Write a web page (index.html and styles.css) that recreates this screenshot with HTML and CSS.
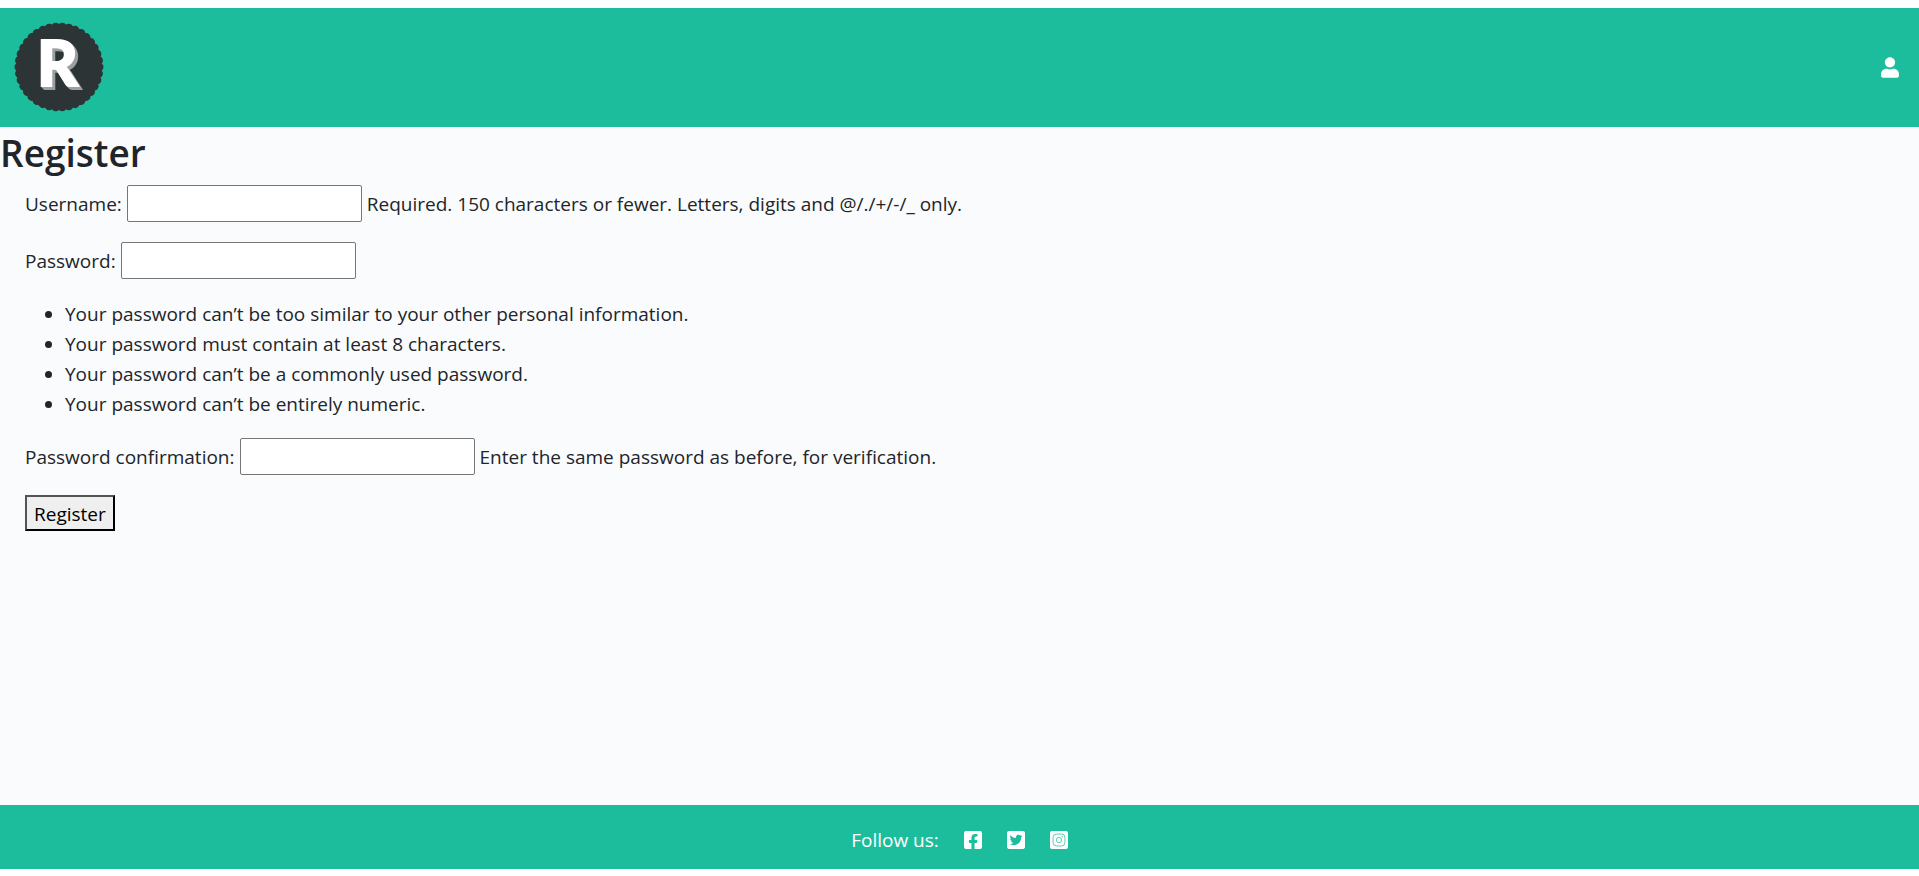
FILE: index.html
```html
<!DOCTYPE html>
<html lang="en">
<head>
<meta charset="utf-8">
<title>Register</title>
<link rel="stylesheet" href="styles.css">
</head>
<body>
<header class="site-header">
  <a class="logo" href="#" aria-label="Home">
    <svg viewBox="0 0 90 90" width="90" height="90" aria-hidden="true">
      <circle cx="45" cy="45" r="42" fill="#2d3436"/>
      <circle class="scallops" cx="45" cy="45" r="40" pathLength="38"/>
      <text class="logo-letter" x="23" y="64">R</text>
    </svg>
  </a>
  <a class="icon-link" href="#" aria-label="Account">
    <svg class="user-icon" viewBox="0 0 448 512"><path d="M224 256c70.700 0 128-57.300 128-128S294.700 0 224 0 96 57.300 96 128s57.300 128 128 128zm89.600 32h-16.700c-22.200 10.200-46.900 16-72.900 16s-50.600-5.800-72.900-16h-16.700C60.200 288 0 348.200 0 422.400V464c0 26.500 21.500 48 48 48h352c26.500 0 48-21.500 48-48v-41.600c0-74.200-60.200-134.400-134.400-134.400z"/></svg>
  </a>
</header>
<main class="content">
  <h1 class="title">Register</h1>
  <form class="register-form">
    <div class="field">
      <label for="username">Username:</label>
      <input id="username" type="text" maxlength="150">
      <span>Required. 150 characters or fewer. Letters, digits and @/./+/-/_ only.</span>
    </div>
    <div class="field">
      <label for="password1">Password:</label>
      <input id="password1" type="password">
    </div>
    <ul class="rules">
      <li>Your password can’t be too similar to your other personal information.</li>
      <li>Your password must contain at least 8 characters.</li>
      <li>Your password can’t be a commonly used password.</li>
      <li>Your password can’t be entirely numeric.</li>
    </ul>
    <div class="field">
      <label for="password2">Password confirmation:</label>
      <input id="password2" type="password">
      <span>Enter the same password as before, for verification.</span>
    </div>
    <button class="submit" type="submit">Register</button>
  </form>
</main>
<footer class="site-footer">
  <span>Follow us:</span>
  <a class="icon-link" href="#" aria-label="Facebook">
    <svg class="social-icon" viewBox="0 32 448 448"><path d="M400 32H48A48 48 0 0 0 0 80v352a48 48 0 0 0 48 48h137.250V327.690h-63V256h63v-54.640c0-62.150 37-96.480 93.670-96.480 27.140 0 55.520 4.840 55.520 4.840v61h-31.270c-30.810 0-40.420 19.120-40.420 38.730V256h68.780l-11 71.690h-57.780V480H400a48 48 0 0 0 48-48V80a48 48 0 0 0-48-48z"/></svg>
  </a>
  <a class="icon-link" href="#" aria-label="Twitter">
    <svg class="social-icon" viewBox="0 32 448 448"><path d="M400 32H48C21.500 32 0 53.500 0 80v352c0 26.500 21.500 48 48 48h352c26.500 0 48-21.500 48-48V80c0-26.500-21.500-48-48-48zm-48.900 158.800c.2 2.800.2 5.700.2 8.500 0 86.700-66 186.600-186.600 186.600-37.200 0-71.700-10.800-100.700-29.400 5.300.6 10.400.8 15.800.8 30.700 0 58.900-10.400 81.400-28-28.800-.6-53-19.500-61.300-45.500 10.100 1.500 19.200 1.500 29.600-1.200-30-6.100-52.500-32.500-52.500-64.400v-.8c8.700 4.900 18.900 7.900 29.600 8.300a65.447 65.447 0 0 1-29.200-54.600c0-12.200 3.200-23.400 8.900-33.100 32.300 39.800 80.800 65.800 135.200 68.600-9.300-44.500 24-80.600 64-80.600 18.900 0 35.900 7.900 47.900 20.700 14.800-2.800 29-8.300 41.600-15.800-4.900 15.200-15.200 28-28.800 36.100 13.200-1.400 26-5.100 37.800-10.200-8.900 13.100-20.100 24.700-32.900 34z"/></svg>
  </a>
  <a class="icon-link" href="#" aria-label="Instagram">
    <svg class="social-icon" viewBox="0 0 448 448"><rect width="448" height="448" rx="48"/><g fill="none" stroke="#1cbd9c" stroke-width="18"><rect x="76" y="76" width="296" height="296" rx="84"/><circle cx="224" cy="224" r="64"/></g><circle cx="303" cy="145" r="16" fill="#1cbd9c"/></svg>
  </a>
</footer>
</body>
</html>
```
FILE: styles.css
```css
* { box-sizing: border-box; }
body {
  margin: 0;
  min-height: 100vh;
  padding: 8px 0 7px;
  display: flex;
  flex-direction: column;
  background: #fff;
  color: #212529;
  font-family: "Segoe UI", "Open Sans", "Noto Sans", sans-serif;
  font-size: 19px;
  line-height: 30px;
}
.site-header {
  display: flex;
  align-items: center;
  justify-content: space-between;
  padding: 14px 20px 15px 14px;
  background: #1cbd9c;
}
.logo, .icon-link { display: flex; }
.scallops {
  fill: none;
  stroke: #2d3436;
  stroke-width: 9px;
  stroke-linecap: round;
  stroke-dasharray: 0 1;
}
.logo-letter {
  font-family: Lato, sans-serif;
  font-weight: 900;
  font-size: 63px;
  fill: #fff;
  stroke: #fff;
  stroke-width: 2px;
  filter: drop-shadow(1px 1px 0 #9a9fa0) drop-shadow(2px 2px 0 #9a9fa0);
}
.user-icon { width: 18px; height: 21px; fill: #fff; }
.content { flex: 1; background: #fafbfd; }
.title {
  margin: 0;
  padding-top: 2px;
  font-size: 37px;
  font-weight: 600;
  line-height: 48px;
}
.register-form { padding: 8px 25px; }
.field {
  display: flex;
  align-items: center;
  gap: 5px;
  margin-bottom: 20px;
}
.field input {
  width: 235px;
  height: 37px;
  border: 1px solid #767676;
  border-radius: 2px;
  background: #fff;
  padding: 1px 2px;
  font: inherit;
}
.rules { margin: 0 0 19px; padding-left: 40px; }
.submit {
  height: 36px;
  padding: 1px 7px 0;
  border: 2px outset #000;
  background: #efefef;
  color: #000;
  font: inherit;
}
.site-footer {
  display: flex;
  align-items: center;
  justify-content: center;
  gap: 25px;
  padding: 20px 0 14px;
  background: #1cbd9c;
  color: #fff;
}
.social-icon { width: 18px; height: 18px; fill: #fff; }
```
